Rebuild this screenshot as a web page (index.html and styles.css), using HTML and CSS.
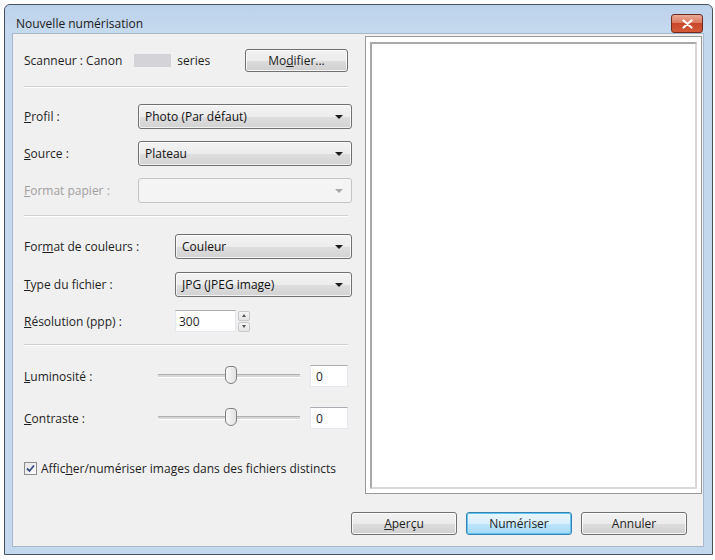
FILE: index.html
```html
<!DOCTYPE html>
<html lang="fr">
<head>
    <meta charset="UTF-8">
    <title>Nouvelle numérisation</title>
    <link rel="stylesheet" href="styles.css">
</head>
<body>
    <div class="window">
        <div class="titlebar">
            <span class="title">Nouvelle numérisation</span>
            <button class="close" aria-label="Fermer">
                <svg width="11" height="10" viewBox="0 0 11 10"><path d="M1.5 1.5 L9.5 8.5 M9.5 1.5 L1.5 8.5" stroke="#fff" stroke-width="2.2" stroke-linecap="round"/></svg>
            </button>
        </div>
        <div class="content">
            <div class="left">
                <div class="scanner-row">
                    <span>Scanneur : Canon</span>
                    <span class="redacted"></span>
                    <span>series</span>
                    <button class="btn modify">Mo<u>d</u>ifier...</button>
                </div>
                <hr class="sep">
                <div class="grid g1">
                    <label><u>P</u>rofil :</label>
                    <div class="combo"><span>Photo (Par défaut)</span><i class="arrow"></i></div>
                    <label><u>S</u>ource :</label>
                    <div class="combo"><span>Plateau</span><i class="arrow"></i></div>
                    <label class="disabled"><u>F</u>ormat papier :</label>
                    <div class="combo off"><span></span><i class="arrow"></i></div>
                </div>
                <hr class="sep">
                <div class="grid g2">
                    <label>For<u>m</u>at de couleurs :</label>
                    <div class="combo"><span>Couleur</span><i class="arrow"></i></div>
                    <label><u>T</u>ype du fichier :</label>
                    <div class="combo"><span>JPG (JPEG image)</span><i class="arrow"></i></div>
                    <label><u>R</u>ésolution (ppp) :</label>
                    <div class="spin-wrap">
                        <div class="spin-input">300</div>
                        <div class="spin">
                            <div class="spin-btn"><i class="up"></i></div>
                            <div class="spin-btn"><i class="down"></i></div>
                        </div>
                    </div>
                </div>
                <hr class="sep">
                <div class="grid g3">
                    <label><u>L</u>uminosité :</label>
                    <div class="slider"><div class="track"></div><div class="thumb"></div></div>
                    <div class="num">0</div>
                    <label><u>C</u>ontraste :</label>
                    <div class="slider"><div class="track"></div><div class="thumb"></div></div>
                    <div class="num">0</div>
                </div>
                <div class="check-row">
                    <span class="checkbox">
                        <svg width="9" height="9" viewBox="0 0 9 9"><path d="M1 4.5 L3.5 7 L8 1.5" stroke="#3b4f86" stroke-width="1.8" fill="none"/></svg>
                    </span>
                    <span>Affic<u>h</u>er/numériser images dans des fichiers distincts</span>
                </div>
            </div>
            <div class="right">
                <div class="preview"><div class="preview-inner"></div></div>
                <div class="buttons">
                    <button class="btn"><u>A</u>perçu</button>
                    <button class="btn default">Numériser</button>
                    <button class="btn">Annuler</button>
                </div>
            </div>
        </div>
    </div>
</body>
</html>
```

FILE: styles.css
```css
body {
    margin: 0;
    background: #fff;
    font-family: "Open Sans", "Noto Sans", sans-serif;
    font-size: 12px;
    color: #1e1e1e;
}
u {
    text-decoration: underline;
    text-underline-offset: 1px;
}
.window {
    margin: 4px 0 0 4px;
    width: 690px;
    height: 542px;
    border: 1px solid #46525e;
    border-radius: 6px 6px 0 0;
    background: #c3d7ed;
    padding: 0 9px 7px 8px;
    display: flex;
    flex-direction: column;
}
.titlebar {
    height: 28px;
    margin: 0 -9px 0 -8px;
    padding: 0 9px 0 11px;
    display: flex;
    align-items: flex-start;
    justify-content: space-between;
    background: linear-gradient(#bcd2eb, #c6daef);
    border-radius: 6px 6px 0 0;
}
.title {
    margin-top: 11px;
    line-height: 16px;
    color: #1b1b1b;
}
.close {
    margin-top: 9px;
    width: 32px;
    height: 19px;
    border: 1px solid #6e2b1f;
    border-radius: 3px;
    background: linear-gradient(#e9a898 0%, #dd7a60 45%, #c9462a 50%, #d25a38 100%);
    padding: 0;
    display: flex;
    align-items: center;
    justify-content: center;
}
.content {
    flex: 1;
    background: #f0f0f0;
    border: 1px solid #a5b8cc;
    margin: 0 -1px;
    display: flex;
}
.left {
    width: 328px;
    padding: 15px 0 0 11px;
}
.scanner-row {
    display: flex;
    align-items: center;
    height: 23px;
}
.redacted {
    width: 37px;
    height: 13px;
    background: #d3d3d8;
    margin: 0 6px 0 12px;
}
.btn {
    font: inherit;
    color: #1e1e1e;
    height: 23px;
    border: 1px solid #707070;
    border-radius: 3px;
    background: linear-gradient(#f2f2f2 0%, #ebebeb 50%, #dddddd 51%, #cfcfcf 100%);
    box-shadow: inset 0 0 0 1px rgba(255, 255, 255, 0.8);
    padding: 0;
}
.modify {
    width: 103px;
    margin-left: auto;
    margin-right: 4px;
}
.sep {
    border: none;
    border-top: 1px solid #d0d0d0;
    border-bottom: 1px solid #fff;
    margin: 0;
    width: 324px;
}
.scanner-row + .sep {
    margin-top: 14px;
}
.grid {
    display: grid;
    align-items: center;
    margin: 16px 0 12px;
}
.g1 {
    grid-template-columns: 114px 214px;
    row-gap: 12px;
}
.g2 {
    grid-template-columns: 151px 177px;
    row-gap: 13px;
    margin-top: 17px;
}
.g3 {
    grid-template-columns: 134px 142px 10px 38px;
    row-gap: 20px;
    margin-top: 19px;
}
label.disabled {
    color: #a0a0a0;
}
.combo {
    height: 25px;
    box-sizing: border-box;
    border: 1px solid #707070;
    border-radius: 3px;
    background: linear-gradient(#f3f3f3 0%, #ececec 50%, #dedede 51%, #d2d2d2 100%);
    box-shadow: inset 0 0 0 1px rgba(255, 255, 255, 0.7);
    display: flex;
    align-items: center;
    padding: 0 8px 0 6px;
    color: #111;
}
.combo span {
    flex: 1;
}
.arrow {
    width: 0;
    height: 0;
    border-left: 4px solid transparent;
    border-right: 4px solid transparent;
    border-top: 4px solid #1a1a1a;
}
.combo.off {
    border-color: #c4c4c4;
    background: #f4f4f4;
    box-shadow: none;
}
.combo.off .arrow {
    border-top-color: #a8a8a8;
}
.spin-wrap {
    display: flex;
    align-items: center;
    height: 22px;
}
.spin-input {
    width: 61px;
    height: 22px;
    box-sizing: border-box;
    background: #fff;
    border: 1px solid #e3e9ef;
    border-top-color: #abadb3;
    padding: 3px 0 0 3px;
    line-height: 15px;
}
.spin {
    margin-left: 2px;
    width: 12px;
    display: flex;
    flex-direction: column;
    gap: 1px;
}
.spin-btn {
    height: 10px;
    box-sizing: border-box;
    border: 1px solid #c8c8c8;
    border-radius: 2px;
    background: linear-gradient(#f6f6f6, #e4e4e4);
    display: flex;
    align-items: center;
    justify-content: center;
}
.spin-btn i {
    width: 0;
    height: 0;
    border-left: 2px solid transparent;
    border-right: 2px solid transparent;
}
.spin-btn .up {
    border-bottom: 3px solid #555;
}
.spin-btn .down {
    border-top: 3px solid #555;
}
.slider {
    position: relative;
    height: 22px;
    display: flex;
    align-items: center;
}
.track {
    width: 100%;
    height: 2px;
    background: #d6d6d6;
    border-top: 1px solid #b0b0b0;
    border-bottom: 1px solid #fff;
}
.thumb {
    position: absolute;
    left: 67px;
    top: 1px;
    width: 12px;
    height: 18px;
    box-sizing: border-box;
    border: 1px solid #808080;
    border-radius: 4px 4px 6px 6px;
    background: linear-gradient(90deg, #f8f8f8, #e2e2e2);
}
.num {
    grid-column: 4;
    width: 38px;
    height: 22px;
    box-sizing: border-box;
    background: #fff;
    border: 1px solid #e3e9ef;
    border-top-color: #abadb3;
    padding: 3px 0 0 5px;
    line-height: 15px;
}
.check-row {
    display: flex;
    align-items: center;
    gap: 4px;
    margin-top: 31px;
}
.checkbox {
    width: 13px;
    height: 13px;
    box-sizing: border-box;
    border: 1px solid #8e8f8f;
    background: linear-gradient(135deg, #e6e6e6, #fbfbfb);
    display: flex;
    align-items: center;
    justify-content: center;
}
.right {
    flex: 1;
    display: flex;
    flex-direction: column;
    padding: 2px 1px 0 13px;
}
.preview {
    height: 458px;
    box-sizing: border-box;
    border: 1px solid #9a9a9a;
    background: #fff;
    padding: 5px 4px 4px 4px;
}
.preview-inner {
    height: 100%;
    box-sizing: border-box;
    border: 2px solid #a9a9a9;
    border-right-color: #d8d8d8;
    border-bottom-color: #d8d8d8;
}
.buttons {
    display: flex;
    gap: 9px;
    margin: 18px 0 0 -14px;
}
.buttons .btn {
    width: 106px;
}
.btn.default {
    border-color: #3c7fb1;
    box-shadow: inset 0 0 0 1px #5ec6f3;
    background: linear-gradient(#eaf6fd 0%, #d9f0fc 50%, #bee6fd 51%, #a7d9f5 100%);
}
```
